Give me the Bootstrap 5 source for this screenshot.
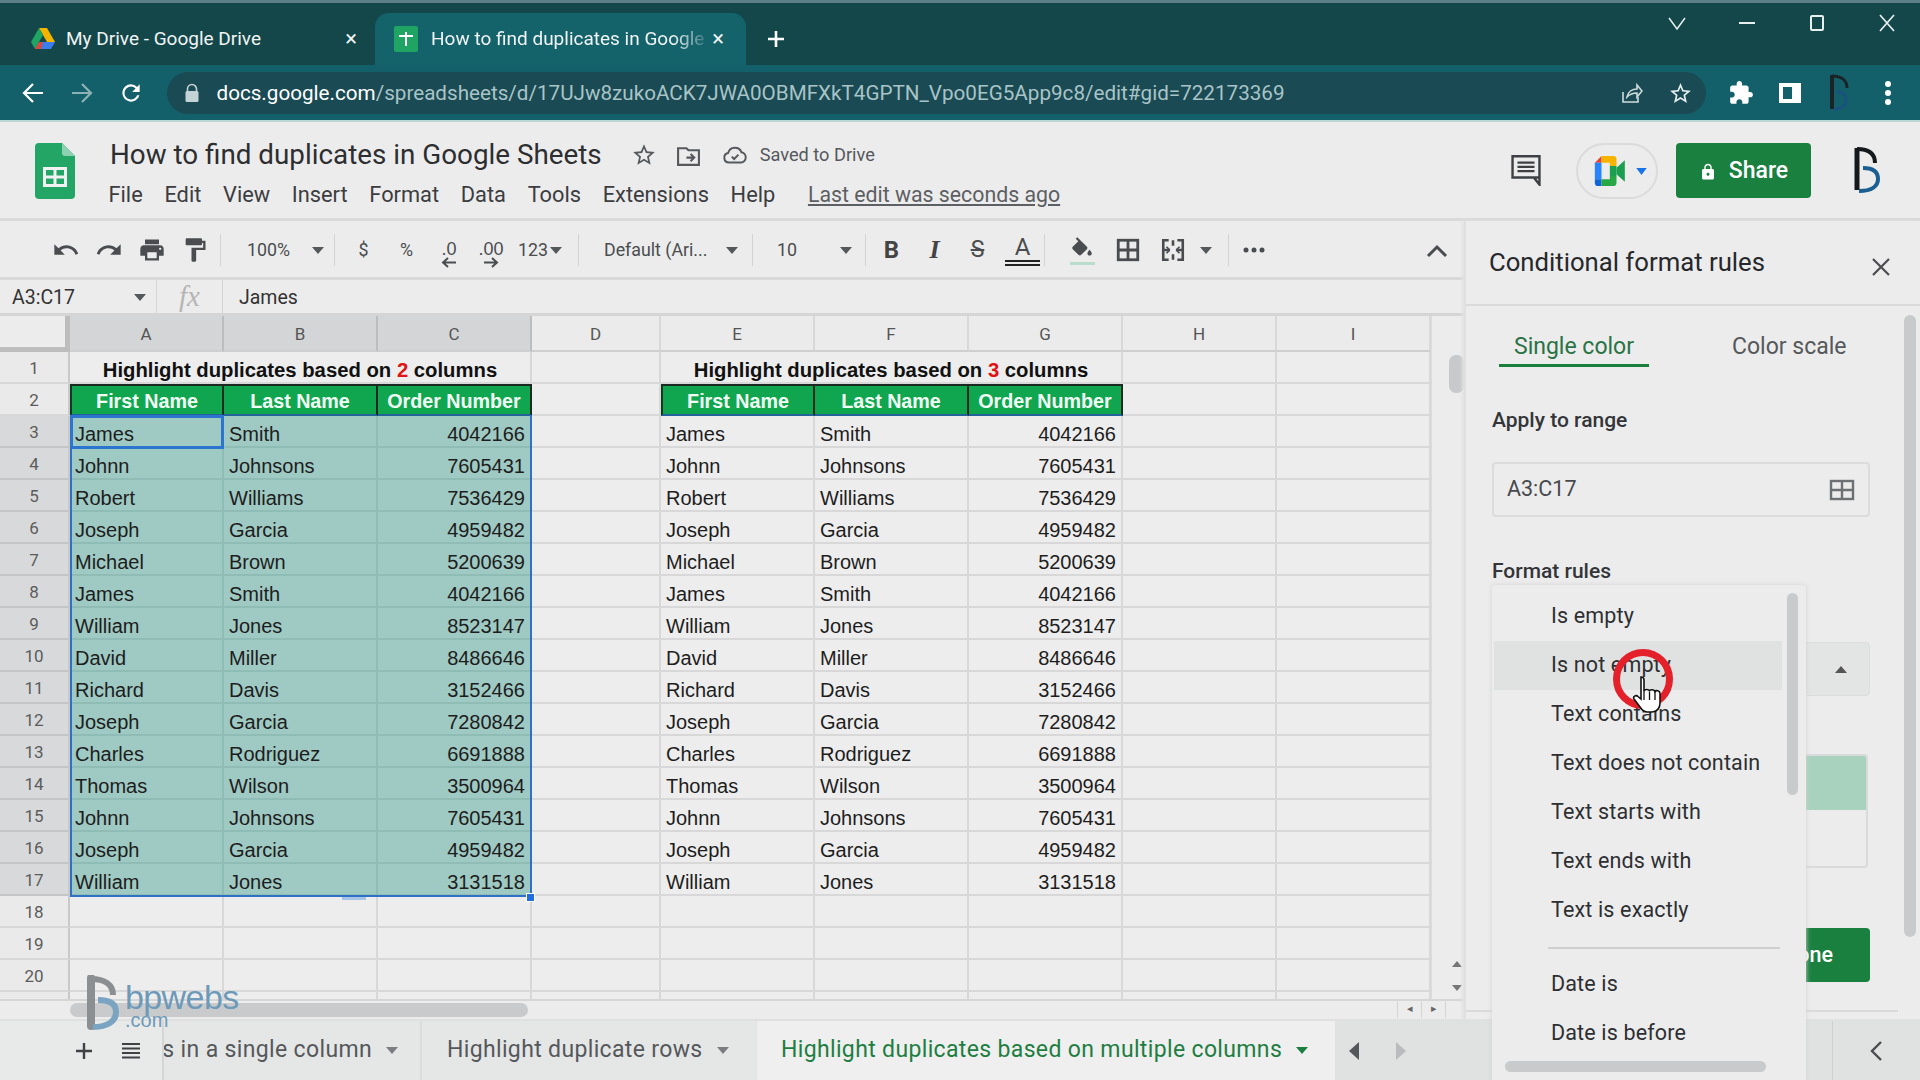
<!DOCTYPE html>
<html lang="en"><head><meta charset="utf-8"><title>How to find duplicates in Google Sheets</title>
<link href="https://cdn.jsdelivr.net/npm/bootstrap@5.3.0/dist/css/bootstrap.min.css" rel="stylesheet">
<script src="https://cdn.jsdelivr.net/npm/bootstrap@5.3.0/dist/js/bootstrap.bundle.min.js"></script>
<style>
html,body{width:1920px;height:1080px;overflow:hidden;margin:0}
body{font-family:Roboto,"Liberation Sans",sans-serif;background:#ececec;color:#2f3133;position:relative}
.strip{height:65px;background:#13474a;border-top:3px solid #5d7f86;color:#f0f4f4;font-size:19px}
.ctab{height:52px;margin-top:10px;padding:0 18px 0 19px;border-radius:14px 14px 0 0;white-space:nowrap}
.ctab1{width:375px;padding-left:30px}.ctab2{width:371px;background:#14626a;padding-right:22px}
.ctab .lbl{flex:1;overflow:hidden;margin-left:10px}
.ctab2 .lbl{margin-left:13px}
.ctab .tfade{-webkit-mask-image:linear-gradient(90deg,#000 86%,transparent);mask-image:linear-gradient(90deg,#000 86%,transparent)}
.ctab .x{font-size:22px;line-height:1}
.plus{margin-left:18px;margin-top:10px}
.winb{width:70px;text-align:center;line-height:0;margin-top:10px}
.winrow{margin-right:-2px}
.cbar{height:57px;background:#14606a;border-bottom:2px solid #bcd6d4;padding:1px 0 0 21px}
.nav1{width:48.5px;line-height:0}
.omni{width:1539px;height:42px;border-radius:21px;background:#1a4a53;color:#a9c4c7;font-size:20.65px;padding:0 13px 0 17px;white-space:nowrap}
.omni .url{margin-left:9px}
.omni b{color:#fff;font-weight:400}
.omni .shr{margin-left:auto;margin-right:25px}
.cact{width:49px;text-align:center;line-height:0}
.cact1{margin-left:11px}
.dochead{height:99px;border-bottom:3px solid #d9d9d9;background:#ececec}
.slogo{margin:21px 35px 0 35px;line-height:0}
.dtitle{height:40px;margin-top:13px;font-size:27.8px;color:#2c2e30;white-space:nowrap}
.saved{font-size:18.2px;color:#55585c}
.m29{margin-left:29px}.m20{margin-left:19px}.m21{margin-left:21px}
.menu{font-size:21.8px;color:#3b3d40;height:36px;margin-left:-1.5px;padding-top:4px}
.menu span{margin-right:21.7px}
.menu .lastedit{color:#5c5f63;text-decoration:underline;margin-left:11px;font-size:21.3px}
.docright{margin-left:auto;padding-top:21px}
.cmt{line-height:0;margin-right:33px;padding-top:1px}
.meet{width:82px;height:56px;border:2px solid #dbdbdb;border-radius:28px;margin-right:18px;padding-left:6px;gap:6px}
.share{width:135px;height:55px;background:#1a8040;color:#fff;font-size:23px;font-weight:500;border-radius:4px;gap:12px;padding-top:2px}
.profile{margin:3px 39px 0 42px;line-height:0}
.workspace{height:798px}
.left{width:1464px}
.tools{height:59px;border-bottom:3px solid #d9d9d9;color:#4a4c4f;font-size:17.8px;padding:2px 0 0 44px}
.t{width:43px;text-align:center;line-height:0;flex:none}
.t.txt{line-height:1.2}
.sep{width:1px;height:32px;background:#d3d3d3;flex:none}
.caret{width:0;height:0;border:6px solid transparent;border-top:7px solid #55585b;border-bottom:0;display:inline-block;flex:none}
.zoomb{width:113px;padding:0 10px 0 26px}.fontb{width:173px;padding:0 14px 0 25px}.sizeb{width:112px;padding:0 13px 0 24px}
.after7{margin-left:7px}
.t.num{width:42px;font-family:"Liberation Sans",sans-serif;font-size:18px;line-height:1}
.num span{display:block;margin-top:8px}.num svg{display:block;margin:-1px auto 0}
.n123{margin-left:6px}.c123{margin-left:2px}
.bi{font-family:Roboto,sans-serif;font-size:24px;font-weight:700;color:#444}
.bi.it{font-family:"Liberation Serif",serif;font-style:italic;font-size:26px}
.ss{font-size:23px}.aa{font-size:24px;line-height:24px;display:block}
.ta{margin-left:2px}
.aline{border-top:2px solid #222;margin:1px 4px 0}.aline2{margin-top:2px}
.fillbar{height:3px;background:#b9ddcd;margin:2px 9px 0}
.mfill{margin-left:16px}.mbord{margin-left:3px}.mmerge{margin-left:2px}.cmerge{margin-left:5px}
.formula{height:36px;border-bottom:3px solid #d5d5d5;font-size:19.5px;color:#333}
.namebox{width:157px;padding:2px 10px 0 12px;height:100%;border-right:1px solid #d5d5d5}
.jm{margin-top:2px}
.fx{width:66px;height:100%;border-right:1px solid #d5d5d5;text-align:center;font-family:"Liberation Serif",serif;font-style:italic;font-size:29px;color:#b5b5b5;line-height:33px}
.gridwrap{height:683px;width:1464px;overflow:hidden}
.sheet{table-layout:fixed;width:1431px;border-collapse:separate;border-spacing:0;font-family:"Liberation Sans",Arial,sans-serif;font-size:20px;color:#1d1d1d}
.sheet col.c0{width:70px}.sheet col.cw{width:154px}.sheet col.cd{width:129px}
.sheet td,.sheet th{height:32px;padding:6px 5px 0 4px;border-right:2px solid #d8d8d8;border-bottom:2px solid #d8d8d8;white-space:nowrap;overflow:hidden;background:#ededed;font-weight:400;line-height:1}
.sheet thead th{height:36px;padding:2px 0 0;text-align:center;font-size:17px;color:#555;background:#ebebeb;border-bottom:2px solid #cfcfcf;font-family:Roboto,sans-serif}
.sheet tbody th{padding:2px 0 0;background:#eaeaea;text-align:center;font-size:17px;color:#5c5c5c;font-family:Roboto,sans-serif;border-right:2px solid #c9c9c9}
.sheet thead th.sel{background:#d3d5d7;border-right-color:#bcbdbe}
.sheet tbody th.sel{background:#d7d9da;border-bottom-color:#c4c5c6}
.sheet thead th.corner{background:#ececec;border-right:5px solid #bdbdbd;border-bottom:5px solid #bdbdbd}
.sheet td.h{background:#9fc9c3;border-color:#90bcb6;padding-left:5px}
.sheet td.r{text-align:right}
.sheet td.c{text-align:center;font-weight:700;color:#111;padding-left:0;padding-right:0;font-size:20.3px}
.sheet td.g{background:#10a650;color:#f2fff4;font-weight:700;font-size:19.7px;text-align:center;border-top:2px solid #1a2a20;border-right:2px solid #1a2a20;border-bottom:2px solid #22639a;padding:4px 0 0}
.sheet td.g0{border-left:2px solid #0c3a20}
.red{color:#e01414}
.sheet td.pl{padding-left:5px}
.gridrow{position:relative}
.rangebox{position:absolute;left:70px;top:99px;width:462px;height:482px;border:2px solid #2f71c6;border-top-width:0;pointer-events:none}
.cellbox{position:absolute;left:70px;top:99px;width:154px;height:34px;border:3px solid #2b74d0}
.handle{position:absolute;left:526px;top:577px;width:9px;height:9px;background:#1f6fe0;border:1px solid #fff}
.btick{position:absolute;left:342px;top:581px;width:24px;height:3px;background:#a5c4e6}
.vs{width:33px;position:relative;border-left:1px solid #dcdcdc}
.vthumb{position:absolute;left:17px;top:39px;width:15px;height:38px;background:#c8c9ca;border-radius:7px}
.varrows{position:absolute;left:19px;bottom:8px;line-height:0}
.hbar{height:19px;padding-left:70px;position:relative;border-top:2px solid #d6d6d6}
.hthumb{width:458px;height:14px;margin-top:2px;background:#c9cacb;border-radius:7px}
.harrows{margin-left:auto;margin-right:18px;width:49px;height:100%;border-right:1px solid #d5d5d5}
.harrows span{flex:1;text-align:center;color:#666;font-size:11px;border-left:1px solid #d5d5d5;line-height:16px}
.panel{width:456px;position:relative;background:#ececec;border-left:2px solid #e0e0e0;box-shadow:-2px 0 3px #e2e2e2}
.phead{height:85px;border-bottom:2px solid #dadada;padding:22px 0 0 23px;font-size:25.7px;color:#26282b}
.phead svg{margin-left:auto;margin-right:29px;margin-top:14px}
.ptabs{padding:24px 0 0 33px;height:62px;font-size:23px;color:#55585b;white-space:nowrap}
.ptabs .on{width:150px;text-align:center;color:#2a7345;border-bottom:3px solid #188038;height:37px;margin-right:83px}
.plabel{font-size:21px;color:#333539;font-weight:500;margin-left:26px;line-height:24px}
.pl1{margin-top:40px}.pl2{margin-top:42px}
.pinput{margin:30px 0 0 26px;width:378px;height:55px;border:2px solid #dcdcdc;border-radius:4px;padding:0 13px;font-size:21.5px;color:#47494c}
.pselect{margin:59px 0 0 26px;width:378px;height:54px;background:#e3e4e4;border:1px solid #dcdcdc;border-radius:4px}
.pselect i{border:6px solid transparent;border-bottom:7px solid #555;border-top:0;margin-left:auto;margin-right:22px}
.ppreview{margin:58px 0 0 26px;width:376px;height:114px;border:2px solid #dadada;border-radius:4px;overflow:hidden}
.ppreview div{height:54px;background:#a8d2bd}
.done{margin:60px 0 0 26px;width:378px;height:54px;background:#1a8040;color:#fff;font-weight:500;font-size:21.5px;border-radius:4px;justify-content:flex-end;padding-right:37px}
.pline{margin:28px 22px 0 0;border-top:2px solid #dadada}
.pscroll{position:absolute;right:4px;top:94px;width:12px;height:622px;background:#c9cacb;border-radius:6px}
.ddmenu{position:absolute;left:26px;top:364px;width:314px;height:500px;background:#ececec;border-radius:4px 4px 0 0;box-shadow:0 0 5px #d2d2d2;padding-top:7px;font-size:21.5px;color:#2d2f32;overflow:hidden}
.ddmenu .it{height:49px;padding-left:57px;width:288px;margin-left:2px;line-height:48px;white-space:nowrap;letter-spacing:.15px}
.ddmenu .hov{background:#e0e2e2}
.ddmenu hr{margin:12px 26px 11px 56px;width:232px;border:0;border-top:2px solid #cfcfcf;opacity:1}
.ddv{position:absolute;right:8px;top:8px;width:11px;height:202px;background:#c9cacb;border-radius:6px}
.ddh{position:absolute;left:13px;top:476px;width:261px;height:11px;background:#c9cacb;border-radius:6px}
.ring{position:absolute;left:1613px;top:649px;width:60px;height:60px;border:7px solid #e4212b;border-radius:50%;z-index:30}
.hand{position:absolute;left:1632px;top:675px;z-index:31;line-height:0}
.stabs{height:61px;background:#e5e6e6;border-top:2px solid #e0e0e0;font-size:23px;color:#55585b;letter-spacing:.35px;white-space:nowrap}
.scontrols{width:164px;height:100%;background:#e8e9e9;border-right:2px solid #d5d5d5;padding-left:74px;position:relative;z-index:2;gap:27px}
.st1{width:258px;height:100%;justify-content:flex-end;border-right:2px solid #dcdcdc;padding-right:22px}
.st2{width:335px;height:100%;padding-left:25px;border-right:1px solid #e2e2e2}
.st3{width:578px;height:100%;padding-left:24px;background:#efefef;color:#1e7e42}
.scaret{width:0;height:0;border:6px solid transparent;border-top:7px solid #7b7d80;border-bottom:0;margin-left:14px;flex:none}
.st3 .scaret{border-top-color:#1e7e42}
.snav{flex:1;height:100%;padding-left:13px;background:#e0e1e1}
.snav .d{margin-left:auto;width:1px;height:100%;background:#d0d0d0;margin-right:37px}
.nx{margin-left:35px}.snend{width:37px}
.wm{position:absolute;left:86px;top:975px;z-index:20;gap:5px;pointer-events:none}
.wmt{color:#6e9ab9;font-family:"Liberation Sans",sans-serif;font-size:34px;line-height:30px;letter-spacing:-.6px;margin-top:7px}
.wmt small{display:block;font-size:20px;line-height:19px;letter-spacing:0;margin-top:-1px}
</style></head>
<body class="d-flex flex-column">

<div class="strip d-flex flex-shrink-0">
  <div class="ctab ctab1 d-flex align-items-center">
    <svg width="26" height="24" viewBox="0 0 26 24"><path d="M9 1h8l8 14h-8z" fill="#f4b400"/><path d="M9 1 1 15l4 7 8-14z" fill="#1fa463"/><path d="M5 22h16l4-7H9z" fill="#3b7ded"/><path d="M5 22l4-7h4l-2 7z" fill="#d9493c"/></svg>
    <span class="lbl">My Drive - Google Drive</span><span class="x">×</span>
  </div>
  <div class="ctab ctab2 d-flex align-items-center">
    <svg width="24" height="26" viewBox="0 0 24 26"><rect width="24" height="26" rx="2" fill="#1fa463"/><path d="M11 6h2v14h-2zM5 9h14v2H5z" fill="#fff"/></svg>
    <span class="lbl tfade">How to find duplicates in Google</span><span class="x">×</span>
  </div>
  <div class="plus d-flex align-items-center"><svg width="24" height="24" viewBox="0 0 24 24"><path d="M12 4v16M4 12h16" stroke="#fff" stroke-width="2.6"/></svg></div>
  <div class="ms-auto d-flex align-items-start winrow">
    <div class="winb"><svg width="20" height="20" viewBox="0 0 20 20"><path d="M2 5l8 11 8-11" fill="none" stroke="#e8efef" stroke-width="1.5"/></svg></div>
    <div class="winb"><svg width="20" height="20" viewBox="0 0 20 20"><path d="M2 10h16" stroke="#e8efef" stroke-width="2"/></svg></div>
    <div class="winb"><svg width="20" height="20" viewBox="0 0 20 20"><rect x="4" y="3" width="12" height="14" rx="1" fill="none" stroke="#e8efef" stroke-width="2"/></svg></div>
    <div class="winb"><svg width="20" height="20" viewBox="0 0 20 20"><path d="M3 2l14 16M17 2 3 18" stroke="#e8efef" stroke-width="1.7"/></svg></div>
  </div>
</div>

<div class="cbar d-flex align-items-center flex-shrink-0">
  <div class="nav1"><svg width="24" height="24" viewBox="0 0 24 24"><path d="M22 12H4M12 3l-9 9 9 9" fill="none" stroke="#fff" stroke-width="2.2"/></svg></div>
  <div class="nav1"><svg width="24" height="24" viewBox="0 0 24 24"><path d="M2 12h18M12 3l9 9-9 9" fill="none" stroke="#8db0b2" stroke-width="2.2"/></svg></div>
  <div class="nav1"><svg width="26" height="26" viewBox="0 0 24 24"><path d="M17.65 6.35A7.95 7.95 0 0 0 12 4a8 8 0 1 0 7.73 10h-2.08A6 6 0 1 1 12 6c1.66 0 3.14.69 4.22 1.78L13 11h7V4l-2.35 2.35z" fill="#fff"/></svg></div>
  <div class="omni d-flex align-items-center">
    <svg class="me-2 flex-shrink-0" width="16" height="20" viewBox="0 0 16 20"><path d="M3.5 8V6a4.5 4.5 0 0 1 9 0v2" fill="none" stroke="#c4d4d6" stroke-width="1.6"/><rect x="1.5" y="8" width="13" height="11" rx="1.5" fill="#c4d4d6"/></svg>
    <span class="url"><b>docs.google.com</b>/spreadsheets/d/17UJw8zukoACK7JWA0OBMFXkT4GPTN_Vpo0EG5App9c8/edit#gid=722173369</span>
    <svg class="shr flex-shrink-0" width="24" height="24" viewBox="0 0 24 24" fill="none" stroke="#cfdcdd" stroke-width="1.6"><path d="M4 11v10h15v-5"/><path d="M8 16c1-5 5-8 10-8V4l5 6-5 6v-4c-4 0-7 1-10 4z"/></svg>
    <svg class="flex-shrink-0" width="25" height="25" viewBox="0 0 24 24"><path fill="#e5eeee" d="M22 9.24l-7.19-.62L12 2 9.19 8.63 2 9.24l5.46 4.73L5.82 21 12 17.27 18.18 21l-1.63-7.03L22 9.24zM12 15.4l-3.76 2.27 1-4.28-3.32-2.88 4.38-.38L12 6.1l1.71 4.04 4.38.38-3.32 2.88 1 4.28L12 15.4z"/></svg>
  </div>
  <div class="cact cact1"><svg width="26" height="26" viewBox="0 0 24 24"><path fill="#fff" d="M20.5 11H19V7c0-1.1-.9-2-2-2h-4V3.5C13 2.12 11.88 1 10.5 1S8 2.12 8 3.5V5H4c-1.1 0-1.99.9-1.99 2v3.8H3.5c1.49 0 2.7 1.21 2.7 2.7s-1.21 2.7-2.7 2.7H2V20c0 1.1.9 2 2 2h3.8v-1.5c0-1.49 1.21-2.7 2.7-2.7 1.49 0 2.7 1.21 2.7 2.7V22H17c1.1 0 2-.9 2-2v-4h1.5c1.38 0 2.5-1.12 2.5-2.5S21.88 11 20.5 11z"/></svg></div>
  <div class="cact"><svg width="24" height="24" viewBox="0 0 24 24"><path fill="#fff" fill-rule="evenodd" d="M1 2h22v20H1zM5 6v12h9V6z"/></svg></div>
  <div class="cact"><svg width="22" height="40" viewBox="0 0 22 40" fill="none"><path d="M4 2v34" stroke="#1a2426" stroke-width="4"/><path d="M4 3c10 0 15 5 15 12" stroke="#1a2426" stroke-width="3"/><path d="M9 19c6 0 9 3 9 8s-4 9-12 9" stroke="#18527d" stroke-width="3"/></svg></div>
  <div class="cact"><svg width="8" height="26" viewBox="0 0 8 26" fill="#fff"><circle cx="4" cy="4" r="3"/><circle cx="4" cy="13" r="3"/><circle cx="4" cy="22" r="3"/></svg></div>
</div>

<div class="dochead d-flex flex-shrink-0">
  <div class="slogo"><svg width="40" height="56" viewBox="0 0 40 56"><path d="M4 0h23l13 13v39a4 4 0 0 1-4 4H4a4 4 0 0 1-4-4V4a4 4 0 0 1 4-4z" fill="#23a566"/><path d="M27 0l13 13H30a3 3 0 0 1-3-3z" fill="#8ed1b1"/><path d="M8 24h24v20H8zM11 27v5.5h7.5V27zM21.500 27v5.500H29V27zM11 35.500V41h7.500v-5.500zM21.500 35.500V41H29v-5.500z" fill="#f1f1f1" fill-rule="evenodd"/></svg></div>
  <div>
    <div class="dtitle d-flex align-items-center">
      <span>How to find duplicates in Google Sheets</span>
      <svg class="m29" width="26" height="26" viewBox="0 0 24 24"><path fill="#56585b" d="M22 9.24l-7.19-.62L12 2 9.19 8.63 2 9.24l5.46 4.73L5.82 21 12 17.27 18.18 21l-1.63-7.03L22 9.24zM12 15.4l-3.76 2.27 1-4.28-3.32-2.88 4.38-.38L12 6.1l1.71 4.04 4.38.38-3.32 2.88 1 4.28L12 15.4z"/></svg>
      <svg class="m20" width="25" height="25" viewBox="0 0 24 24" fill="none" stroke="#56585b" stroke-width="2"><path d="M2 5h8l2 2h10v14H2z"/><path d="M10 14h7M14 10.500l3.500 3.500-3.500 3.500"/></svg>
      <svg class="m21" width="26" height="26" viewBox="0 0 24 24" fill="none" stroke="#56585b" stroke-width="1.8"><path d="M6.500 19a4.500 4.500 0 0 1-.8-8.900A6.500 6.500 0 0 1 18 9.500 4.800 4.800 0 0 1 17.500 19z"/><path d="M9 13.500l2.200 2.200 4-4"/></svg>
      <span class="saved ms-2 ps-1">Saved to Drive</span>
    </div>
    <div class="menu d-flex align-items-center"><span>File</span><span>Edit</span><span>View</span><span>Insert</span><span>Format</span><span>Data</span><span>Tools</span><span>Extensions</span><span>Help</span><span class="lastedit">Last edit was seconds ago</span></div>
  </div>
  <div class="docright d-flex align-items-start">
    <div class="cmt mt-2"><svg width="34" height="34" viewBox="0 0 24 24" fill="none"><path d="M2.500 3h19v15h-19zM21.500 18v5l-4-5" stroke="#3d3f42" stroke-width="1.700"/><path d="M6 7.500h12M6 10.500h12M6 13.500h12" stroke="#3d3f42" stroke-width="1.600"/></svg></div>
    <div class="meet d-flex align-items-center justify-content-center">
      <svg width="37" height="30" viewBox="0 0 40 36"><path d="M8 0 0 8h8z" fill="#ea4335"/><path d="M8 0h14a4 4 0 0 1 4 4v8h-8V8H8z" fill="#f6b400"/><path d="M0 8h8v20H0z" fill="#2684fc"/><path d="M0 28h8v8H4a4 4 0 0 1-4-4z" fill="#0f66d8"/><path d="M8 28h10v-4h8v8a4 4 0 0 1-4 4H8z" fill="#28a745"/><path d="M18 12h8v12h-8z" fill="#1c9e50"/><path d="M26 14l10-9v26l-10-9z" fill="#1c9e50"/></svg>
      <svg width="11" height="7" viewBox="0 0 12 8"><path d="M0 0h12L6 8z" fill="#1a73e8"/></svg>
    </div>
    <div class="share d-flex align-items-center justify-content-center"><svg width="18" height="22" viewBox="0 0 24 24"><path fill="#fff" d="M18 8h-1V6c0-2.760-2.240-5-5-5S7 3.240 7 6v2H6c-1.100 0-2 .9-2 2v10c0 1.100.9 2 2 2h12c1.100 0 2-.9 2-2V10c0-1.100-.9-2-2-2zm-6 9c-1.100 0-2-.9-2-2s.9-2 2-2 2 .9 2 2-.9 2-2 2zm3.100-9H8.900V6c0-1.710 1.390-3.100 3.100-3.100 1.710 0 3.100 1.390 3.100 3.100v2z"/></svg><span>Share</span></div>
    <div class="profile"><svg width="28" height="48" viewBox="0 0 28 48" fill="none"><path d="M4 2v42" stroke="#16191c" stroke-width="5"/><path d="M4 3c12 0 18 5 18 14" stroke="#16191c" stroke-width="4"/><path d="M10 22c10 0 15 4 15 11s-6 12-19 12" stroke="#1b5e92" stroke-width="4"/></svg></div>
  </div>
</div>

<div class="workspace d-flex flex-shrink-0">
  <div class="left d-flex flex-column">
    <div class="tools d-flex align-items-center flex-shrink-0">
      <div class="t"><svg width="28" height="28" viewBox="0 0 24 24"><path fill="#4a4c4f" d="M12.500 8c-2.650 0-5.050.99-6.900 2.600L2 7v9h9l-3.620-3.620c1.390-1.160 3.160-1.880 5.120-1.880 3.540 0 6.550 2.310 7.600 5.500l2.370-.78C21.080 11.030 17.150 8 12.500 8z"/></svg></div>
      <div class="t"><svg width="28" height="28" viewBox="0 0 24 24"><path fill="#4a4c4f" d="M18.400 10.600C16.550 8.990 14.150 8 11.500 8c-4.650 0-8.580 3.030-9.960 7.220L3.900 16c1.050-3.190 4.050-5.500 7.600-5.500 1.950 0 3.730.72 5.120 1.880L13 16h9V7l-3.600 3.600z"/></svg></div>
      <div class="t"><svg width="28" height="28" viewBox="0 0 24 24"><path fill="#4a4c4f" d="M19 8H5c-1.660 0-3 1.340-3 3v6h4v4h12v-4h4v-6c0-1.660-1.340-3-3-3zm-3 11H8v-5h8v5zm3-7c-.55 0-1-.45-1-1s.45-1 1-1 1 .45 1 1-.45 1-1 1zm-1-9H6v4h12V3z"/></svg></div>
      <div class="t"><svg width="28" height="28" viewBox="0 0 24 24"><path fill="#4a4c4f" d="M18 4V3c0-.55-.45-1-1-1H5c-.55 0-1 .45-1 1v4c0 .55.45 1 1 1h12c.55 0 1-.45 1-1V6h1v4H9v11c0 .55.45 1 1 1h2c.55 0 1-.45 1-1v-9h8V4h-3z"/></svg></div>
      <div class="sep ms-1"></div>
      <div class="zoomb d-flex align-items-center"><span>100%</span><span class="caret ms-auto"></span></div>
      <div class="sep"></div>
      <div class="t txt after7">$</div><div class="t txt">%</div>
      <div class="t num"><span>.0</span><svg width="18" height="11" viewBox="0 0 18 11"><path d="M16 5.500H3M8 1 3 5.500 8 10" stroke="#4a4c4f" stroke-width="2" fill="none"/></svg></div>
      <div class="t num"><span>.00</span><svg width="18" height="11" viewBox="0 0 18 11"><path d="M2 5.500h13M10 1l5 4.500L10 10" stroke="#4a4c4f" stroke-width="2" fill="none"/></svg></div>
      <div class="n123">123</div><span class="caret c123"></span>
      <div class="sep ms-3"></div>
      <div class="fontb d-flex align-items-center"><span>Default (Ari...</span><span class="caret ms-auto"></span></div>
      <div class="sep"></div>
      <div class="sizeb d-flex align-items-center"><span>10</span><span class="caret ms-auto"></span></div>
      <div class="sep"></div>
      <div class="t txt bi ms-1">B</div><div class="t txt bi it">I</div><div class="t txt ss"><span class="text-decoration-line-through">S</span></div>
      <div class="t ta"><span class="aa">A</span><div class="aline"></div><div class="aline aline2"></div></div>
      <div class="sep"></div>
      <div class="t mfill"><svg width="26" height="24" viewBox="0 0 24 20"><path fill="#4a4c4f" d="M16.560 8.940 7.620 0 6.210 1.410l2.380 2.380-5.150 5.150c-.59.59-.59 1.540 0 2.120l5.500 5.500c.29.29.68.44 1.060.44s.77-.15 1.060-.44l5.500-5.500c.59-.58.59-1.530 0-2.120zM19 11.500s-2 2.170-2 3.500c0 1.100.9 2 2 2s2-.9 2-2c0-1.330-2-3.500-2-3.500z"/></svg><div class="fillbar"></div></div>
      <div class="t mbord"><svg width="26" height="26" viewBox="0 0 24 24" fill="none" stroke="#4a4c4f" stroke-width="2.600"><rect x="3" y="3" width="18" height="18"/><path d="M12 3v18M3 12h18"/></svg></div>
      <div class="t mmerge"><svg width="28" height="26" viewBox="0 0 24 24" fill="none" stroke="#4a4c4f" stroke-width="2.400"><path d="M8 3H3v18h5M16 3h5v18h-5M3 12h6M21 12h-6M12 3v5M12 16v5"/><path d="M9 12l-3-3M9 12l-3 3M15 12l3-3M15 12l3 3" stroke-width="1.600"/></svg></div>
      <span class="caret cmerge"></span>
      <div class="sep ms-3"></div>
      <div class="t ms-1"><svg width="22" height="6" viewBox="0 0 22 6" fill="#4a4c4f"><circle cx="3" cy="3" r="2.500"/><circle cx="11" cy="3" r="2.500"/><circle cx="19" cy="3" r="2.500"/></svg></div>
      <div class="ms-auto me-3 lh-1"><svg width="22" height="14" viewBox="0 0 22 14"><path d="M2 12l9-9 9 9" fill="none" stroke="#4a4c4f" stroke-width="3"/></svg></div>
    </div>
    <div class="formula d-flex align-items-center flex-shrink-0">
      <div class="namebox d-flex align-items-center"><span>A3:C17</span><span class="caret ms-auto"></span></div>
      <div class="fx">fx</div>
      <span class="ms-3 jm">James</span>
    </div>
    <div class="gridwrap d-flex flex-shrink-0">
      <div class="gridrow">
      <table class="sheet">
        <colgroup><col class="c0"><col class="cw"><col class="cw"><col class="cw"><col class="cd"><col class="cw"><col class="cw"><col class="cw"><col class="cw"><col class="cw"></colgroup>
        <thead><tr><th class="corner"></th><th class="sel">A</th><th class="sel">B</th><th class="sel">C</th><th>D</th><th>E</th><th>F</th><th>G</th><th>H</th><th>I</th></tr></thead>
        <tbody>
        <tr><th>1</th><td colspan="3" class="c">Highlight duplicates based on <span class="red">2</span> columns</td><td></td><td colspan="3" class="c">Highlight duplicates based on <span class="red">3</span> columns</td><td></td><td></td></tr>
        <tr><th>2</th><td class="g g0">First Name</td><td class="g">Last Name</td><td class="g">Order Number</td><td></td><td class="g g0">First Name</td><td class="g">Last Name</td><td class="g">Order Number</td><td></td><td></td></tr>
        <tr><th class="sel">3</th><td class="h">James</td><td class="h">Smith</td><td class="h r">4042166</td><td></td><td class="pl">James</td><td class="pl">Smith</td><td class="r">4042166</td><td></td><td></td></tr>
        <tr><th class="sel">4</th><td class="h">Johnn</td><td class="h">Johnsons</td><td class="h r">7605431</td><td></td><td class="pl">Johnn</td><td class="pl">Johnsons</td><td class="r">7605431</td><td></td><td></td></tr>
        <tr><th class="sel">5</th><td class="h">Robert</td><td class="h">Williams</td><td class="h r">7536429</td><td></td><td class="pl">Robert</td><td class="pl">Williams</td><td class="r">7536429</td><td></td><td></td></tr>
        <tr><th class="sel">6</th><td class="h">Joseph</td><td class="h">Garcia</td><td class="h r">4959482</td><td></td><td class="pl">Joseph</td><td class="pl">Garcia</td><td class="r">4959482</td><td></td><td></td></tr>
        <tr><th class="sel">7</th><td class="h">Michael</td><td class="h">Brown</td><td class="h r">5200639</td><td></td><td class="pl">Michael</td><td class="pl">Brown</td><td class="r">5200639</td><td></td><td></td></tr>
        <tr><th class="sel">8</th><td class="h">James</td><td class="h">Smith</td><td class="h r">4042166</td><td></td><td class="pl">James</td><td class="pl">Smith</td><td class="r">4042166</td><td></td><td></td></tr>
        <tr><th class="sel">9</th><td class="h">William</td><td class="h">Jones</td><td class="h r">8523147</td><td></td><td class="pl">William</td><td class="pl">Jones</td><td class="r">8523147</td><td></td><td></td></tr>
        <tr><th class="sel">10</th><td class="h">David</td><td class="h">Miller</td><td class="h r">8486646</td><td></td><td class="pl">David</td><td class="pl">Miller</td><td class="r">8486646</td><td></td><td></td></tr>
        <tr><th class="sel">11</th><td class="h">Richard</td><td class="h">Davis</td><td class="h r">3152466</td><td></td><td class="pl">Richard</td><td class="pl">Davis</td><td class="r">3152466</td><td></td><td></td></tr>
        <tr><th class="sel">12</th><td class="h">Joseph</td><td class="h">Garcia</td><td class="h r">7280842</td><td></td><td class="pl">Joseph</td><td class="pl">Garcia</td><td class="r">7280842</td><td></td><td></td></tr>
        <tr><th class="sel">13</th><td class="h">Charles</td><td class="h">Rodriguez</td><td class="h r">6691888</td><td></td><td class="pl">Charles</td><td class="pl">Rodriguez</td><td class="r">6691888</td><td></td><td></td></tr>
        <tr><th class="sel">14</th><td class="h">Thomas</td><td class="h">Wilson</td><td class="h r">3500964</td><td></td><td class="pl">Thomas</td><td class="pl">Wilson</td><td class="r">3500964</td><td></td><td></td></tr>
        <tr><th class="sel">15</th><td class="h">Johnn</td><td class="h">Johnsons</td><td class="h r">7605431</td><td></td><td class="pl">Johnn</td><td class="pl">Johnsons</td><td class="r">7605431</td><td></td><td></td></tr>
        <tr><th class="sel">16</th><td class="h">Joseph</td><td class="h">Garcia</td><td class="h r">4959482</td><td></td><td class="pl">Joseph</td><td class="pl">Garcia</td><td class="r">4959482</td><td></td><td></td></tr>
        <tr><th class="sel">17</th><td class="h">William</td><td class="h">Jones</td><td class="h r">3131518</td><td></td><td class="pl">William</td><td class="pl">Jones</td><td class="r">3131518</td><td></td><td></td></tr>
        <tr><th>18</th><td></td><td></td><td></td><td></td><td></td><td></td><td></td><td></td><td></td></tr>
        <tr><th>19</th><td></td><td></td><td></td><td></td><td></td><td></td><td></td><td></td><td></td></tr>
        <tr><th>20</th><td></td><td></td><td></td><td></td><td></td><td></td><td></td><td></td><td></td></tr>
        <tr><th></th><td></td><td></td><td></td><td></td><td></td><td></td><td></td><td></td><td></td></tr>
        </tbody>
      </table>
      <div class="rangebox"></div><div class="cellbox"></div><div class="btick"></div><div class="handle"></div>
      </div>
      <div class="vs"><div class="vthumb"></div>
        <div class="varrows"><svg width="12" height="30" viewBox="0 0 12 30" fill="#777"><path d="M1 6l5-6 5 6zM1 24l5 6 5-6z"/></svg></div>
      </div>
    </div>
    <div class="hbar d-flex flex-shrink-0">
      <div class="hthumb"></div>
      <div class="harrows d-flex"><span>◂</span><span>▸</span></div>
    </div>
  </div>
  <div class="panel flex-shrink-0">
    <div class="phead d-flex"><span>Conditional format rules</span><svg width="20" height="20" viewBox="0 0 20 20"><path d="M2 2l16 16M18 2 2 18" stroke="#4a4c4f" stroke-width="2.200"/></svg></div>
    <div class="ptabs d-flex"><div class="on">Single color</div><div>Color scale</div></div>
    <div class="plabel pl1">Apply to range</div>
    <div class="pinput d-flex align-items-center"><span>A3:C17</span><svg class="ms-auto" width="26" height="22" viewBox="0 0 26 22" fill="none" stroke="#6e7073" stroke-width="2.400"><rect x="2" y="2" width="22" height="18"/><path d="M2 11h22M13 2v18"/></svg></div>
    <div class="plabel pl2">Format rules</div>
    <div class="pselect d-flex align-items-center"><i></i></div>
    <div class="ppreview"><div></div></div>
    <div class="done d-flex align-items-center">Done</div>
    <div class="pline"></div>
    <div class="pscroll"></div>
    <div class="ddmenu">
      <div class="it">Is empty</div>
      <div class="it hov">Is not empty</div>
      <div class="it">Text contains</div>
      <div class="it">Text does not contain</div>
      <div class="it">Text starts with</div>
      <div class="it">Text ends with</div>
      <div class="it">Text is exactly</div>
      <hr>
      <div class="it">Date is</div>
      <div class="it">Date is before</div>
      <div class="ddv"></div><div class="ddh"></div>
    </div>
  </div>
</div>

<div class="stabs d-flex align-items-center flex-shrink-0">
  <div class="scontrols d-flex align-items-center">
    <svg width="20" height="20" viewBox="0 0 20 20"><path d="M10 2v16M2 10h16" stroke="#3f4144" stroke-width="2.400"/></svg>
    <svg width="20" height="20" viewBox="0 0 20 20"><path d="M1 3h18M1 7.500h18M1 12h18M1 16.500h18" stroke="#3f4144" stroke-width="2.200"/></svg>
  </div>
  <div class="st1 d-flex align-items-center"><span>s in a single column</span><span class="scaret"></span></div>
  <div class="st2 d-flex align-items-center"><span>Highlight duplicate rows</span><span class="scaret"></span></div>
  <div class="st3 d-flex align-items-center"><span>Highlight duplicates based on multiple columns</span><span class="scaret"></span></div>
  <div class="snav d-flex align-items-center">
    <svg width="12" height="20" viewBox="0 0 12 20"><path d="M11 1 1 10l10 9z" fill="#55585b"/></svg>
    <svg class="nx" width="12" height="20" viewBox="0 0 12 20"><path d="M1 1l10 9-10 9z" fill="#b9bbbd"/></svg>
    <div class="d"></div>
    <svg width="13" height="22" viewBox="0 0 13 22"><path d="M11 2 2 11l9 9" fill="none" stroke="#4a4c4f" stroke-width="2.400"/></svg>
    <span class="snend"></span>
  </div>
</div>

<div class="ring"></div>
<div class="hand"><svg width="30" height="38" viewBox="0 0 30 38"><path d="M9 2c2 0 3 1 3 3v11c.5-2 5-2 5.500 0 .5-2 5-1.500 5.500.5 1-1.500 5-1 5 2V28c0 5-3 9-8 9h-5c-3 0-5-2-7-5l-6-8c-1.500-2.500 2-4.500 4-2.500L9 24V5c0-2 0-3 0-3z" fill="#fff" stroke="#111" stroke-width="1.600"/><path d="M12 16v9M17.500 16.500V25M23 17v8" stroke="#111" stroke-width="1.300"/></svg></div>

<div class="wm d-flex">
  <svg width="34" height="56" viewBox="0 0 34 56" fill="none"><path d="M5 3v48" stroke="#8c8f92" stroke-width="8" stroke-linecap="round"/><path d="M5 4c14 0 22 6 22 16" stroke="#8c8f92" stroke-width="6"/><path d="M12 25c12 0 18 4 18 12 0 9-8 15-23 15" stroke="#7ba4c2" stroke-width="6"/></svg>
  <div class="wmt">bpwebs<small>.com</small></div>
</div>
</body></html>
